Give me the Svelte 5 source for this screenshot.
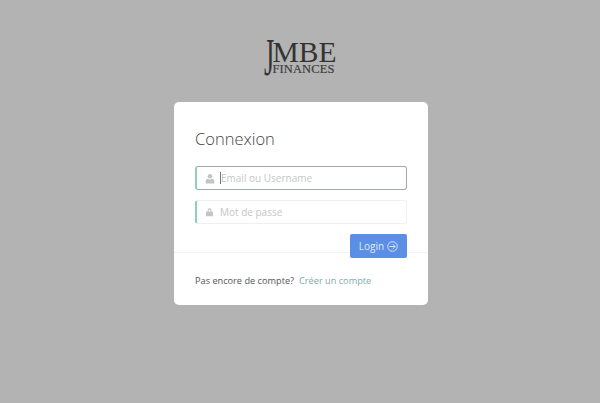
<script>
	let login = "";
	let password = "";
</script>

<main class="page">
	<div class="logo">
		<span class="logo-j">J</span>
		<div class="logo-words">
			<span class="logo-top">MBE</span>
			<span class="logo-bottom">Finances</span>
		</div>
	</div>

	<section class="card">
		<form class="form" on:submit|preventDefault>
			<h1>Connexion</h1>

			<label class="field focused">
				<svg viewBox="0 0 12 12" width="10" height="11" aria-hidden="true">
					<circle cx="6" cy="3.2" r="2.7" />
					<path d="M0.8 12V9.2C0.8 7.4 2.2 6.5 3.6 6.3L6 7.6L8.4 6.3C9.8 6.5 11.2 7.4 11.2 9.2V12Z" />
				</svg>
				<span class="caret"></span>
				<input type="text" placeholder="Email ou Username" bind:value={login} />
			</label>

			<label class="field">
				<svg viewBox="0 0 12 12" width="9" height="10" aria-hidden="true">
					<path d="M3.4 5.5V3.6a2.6 2.6 0 0 1 5.2 0V5.5H7.1V3.6a1.1 1.1 0 0 0-2.2 0V5.5Z" />
					<rect x="1.4" y="5.3" width="9.2" height="6.5" rx="0.8" />
				</svg>
				<input type="password" placeholder="Mot de passe" bind:value={password} />
			</label>

			<div class="actions">
				<button type="submit">
					Login
					<svg viewBox="0 0 12 12" width="11" height="11" aria-hidden="true">
						<circle cx="6" cy="6" r="5.2" />
						<path d="M2.8 6H8.8M6.4 3.5L8.9 6L6.4 8.5" />
					</svg>
				</button>
			</div>
		</form>

		<p class="footer">
			<span>Pas encore de compte?</span>
			<a href="#register">Créer un compte</a>
		</p>
	</section>
</main>

<style>
	:global(body) {
		background: #b3b3b3;
	}
	.page {
		height: 403px;
		overflow: hidden;
		display: flex;
		flex-direction: column;
		align-items: center;
		font-family: "Open Sans", sans-serif;
	}
	.logo {
		display: flex;
		margin-top: 37px;
		height: 65px;
		color: #333;
		font-family: "Liberation Serif", serif;
	}
	.logo-j {
		display: block;
		width: 9px;
		margin-top: -5px;
		font-size: 52px;
		line-height: 52px;
		transform: scaleX(0.5);
		transform-origin: left;
	}
	.logo-words {
		display: flex;
		flex-direction: column;
	}
	.logo-top {
		font-size: 29.5px;
		line-height: 26px;
		margin-top: 2px;
	}
	.logo-bottom {
		font-size: 12.5px;
		line-height: 8px;
		letter-spacing: 0.1px;
		-webkit-text-stroke: 0.2px #3d3d3d;
		text-transform: uppercase;
		color: #3d3d3d;
	}
	.card {
		width: 254px;
		height: 203px;
		margin-left: 2px;
		box-sizing: border-box;
		background: #fff;
		border-radius: 5px;
		display: flex;
		flex-direction: column;
	}
	.form {
		height: 151px;
		box-sizing: border-box;
		padding: 0 21px;
		border-bottom: 1px solid #f2f2f2;
	}
	h1 {
		margin: 25px 0 15px;
		font-size: 16.5px;
		line-height: 24px;
		font-weight: 300;
		color: #444;
	}
	.field {
		height: 24px;
		box-sizing: border-box;
		display: flex;
		align-items: center;
		gap: 6px;
		padding-left: 8px;
		margin-bottom: 10px;
		background: #fff;
		border: 1px solid #f0f0f0;
		border-left: 2px solid #8fcfbd;
		border-radius: 3px;
	}
	.field.focused {
		border: 1px solid #a3a8a8;
		border-left: 2px solid #8fcfbd;
	}
	.field svg {
		flex: none;
		fill: #c4c4c4;
	}
	.caret {
		width: 1px;
		height: 12px;
		background: #777;
		margin-right: -6px;
		margin-left: -1px;
	}
	input {
		flex: 1;
		min-width: 0;
		border: 0;
		outline: 0;
		padding: 0;
		font: 400 10px "Open Sans", sans-serif;
		color: #555;
		background: transparent;
	}
	input::placeholder {
		color: #c6c6c6;
		opacity: 1;
	}
	.actions {
		display: flex;
		justify-content: flex-end;
		margin-top: 2px;
	}
	button {
		height: 24px;
		width: 57px;
		padding: 0;
		display: flex;
		align-items: center;
		justify-content: center;
		gap: 3px;
		border: 0;
		border-radius: 2px;
		background: #5b8fe6;
		color: #dfe9fb;
		font: 400 10px "Open Sans", sans-serif;
	}
	button svg {
		fill: none;
		stroke: #dfe9fb;
		stroke-width: 1;
	}
	.footer {
		margin: 21px 0 0;
		padding: 0 21px;
		font-size: 9.2px;
		line-height: 14px;
		color: #555;
		display: flex;
		gap: 5px;
	}
	.footer a {
		color: #7fa8ad;
		text-decoration: none;
	}
</style>
